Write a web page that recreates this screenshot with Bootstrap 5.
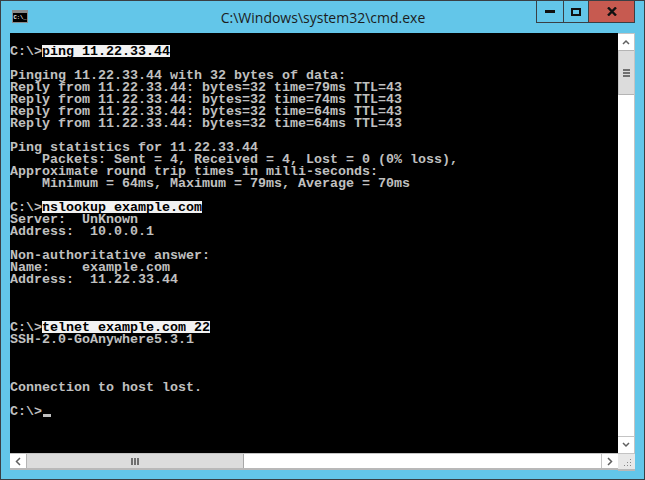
<!doctype html>
<html><head><meta charset="utf-8"><title>cmd</title>
<link href="https://cdn.jsdelivr.net/npm/bootstrap@5.3.0/dist/css/bootstrap.min.css" rel="stylesheet">
<style>
html,body{margin:0;height:480px;overflow:hidden;background:#63c6e9}
.win-frame{width:645px;height:480px;background:#63c6e9;border:1px solid #3a3f44;position:relative}
.title-row{height:32px}
.sys-ico{width:16px;height:13px;margin-left:11px;margin-top:9px;background:#000;border:1px solid #8a8a8a;border-top-width:3px;color:#eee;font:bold 5.5px/9px "Liberation Mono",monospace;overflow:hidden;text-align:center}
.title-txt{font:14px/1 "Segoe UI","Open Sans","Noto Sans",sans-serif;color:#1c1c1c;position:absolute;left:0;right:0;top:10px;text-align:center;padding-left:1px}
.caps{position:absolute;top:0;left:535px;height:22px;border:solid #3a3f44;border-width:0 1px 1px 1px}
.cap-b{height:21px;display:flex;align-items:center;justify-content:center;border-right:1px solid #3a3f44}
.cap-min{width:27px}.cap-max{width:25px}.cap-x{width:45px;background:#c75a50;border:0}
.body-row{margin-left:9px;width:625px}
.term{width:608px;height:420px;background:#000;color:#c0c0c0;margin:0;font:bold 13.33px/12px "Liberation Mono",monospace;overflow:hidden;padding:1px 0 0;white-space:pre;letter-spacing:0}
.term b{display:inline-block;height:12px;margin-top:-1px;padding-top:1px;background:#f2f2f2;color:#000;font-weight:bold;line-height:12px;vertical-align:top}
.cursor{display:inline-block;width:8px;height:3px;margin-left:1px;background:#c0c0c0;vertical-align:baseline;margin-bottom:-2px}
.vbar{width:17px;height:420px;background:#fff;border:solid #c4c4c4;border-width:1px 1px 0 0;display:flex;flex-direction:column;flex:none}
.sb-end{height:16px;display:flex;align-items:center;justify-content:center;background:#fff;flex:none}
.sb-thumb{background:#dcdcdc;border:solid #b4b4b4;border-width:1px 0;height:45px;display:flex;align-items:center;justify-content:center;border-left:1px solid #c4c4c4;flex:none}
.sb-last{border-top:1px solid #c4c4c4;height:17px}
.hbar{height:17px;display:flex;background:#fff;border-top:1px solid #c4c4c4;border-bottom:2px solid #b8b8b8}
.hb-end{width:16px;flex:none;display:flex;align-items:center;justify-content:center;background:#fff}
.hb-thumb{width:218px;flex:none;background:#dcdcdc;border-left:1px solid #b4b4b4;border-right:1px solid #a8a8a8;display:flex;align-items:center;justify-content:center}
.hb-fill{flex:1}
.hb-last{border-left:1px solid #c4c4c4;width:17px}
.grip{width:17px;flex:none;background:#e8e8e8;position:relative;border-top:1px solid #c4c4c4;border-bottom:2px solid #b8b8b8}
</style></head><body>
<div class="win-frame">
 <div class="title-row d-flex">
  <div class="sys-ico">C:\_</div>
  <div class="title-txt">C:\Windows\system32\cmd.exe</div>
 </div>
 <div class="caps d-flex">
  <div class="cap-b cap-min"><svg width="10" height="3"><rect width="10" height="3" fill="#111"/></svg></div>
  <div class="cap-b cap-max"><svg width="10" height="8"><rect x="1" y="1" width="8" height="6" fill="none" stroke="#111" stroke-width="2"/></svg></div>
  <div class="cap-b cap-x"><svg width="10" height="9" viewBox="0 0 10 9"><path d="M1 0.5L9 8.5M9 0.5L1 8.5" stroke="#111" stroke-width="2.4" fill="none"/></svg></div>
 </div>
 <div class="body-row d-flex">
<pre class="term">

C:\&gt;<b>ping 11.22.33.44</b>

Pinging 11.22.33.44 with 32 bytes of data:
Reply from 11.22.33.44: bytes=32 time=79ms TTL=43
Reply from 11.22.33.44: bytes=32 time=74ms TTL=43
Reply from 11.22.33.44: bytes=32 time=64ms TTL=43
Reply from 11.22.33.44: bytes=32 time=64ms TTL=43

Ping statistics for 11.22.33.44
    Packets: Sent = 4, Received = 4, Lost = 0 (0% loss),
Approximate round trip times in milli-seconds:
    Minimum = 64ms, Maximum = 79ms, Average = 70ms

C:\&gt;<b>nslookup example.com</b>
Server:  UnKnown
Address:  10.0.0.1

Non-authoritative answer:
Name:    example.com
Address:  11.22.33.44



C:\&gt;<b>telnet example.com 22</b>
SSH-2.0-GoAnywhere5.3.1



Connection to host lost.

C:\&gt;<span class="cursor"></span></pre>
  <div class="vbar">
   <div class="sb-end"><svg width="8" height="6"><path d="M1 5L4 2L7 5" fill="none" stroke="#606060" stroke-width="1.5"/></svg></div>
   <div class="sb-thumb"><svg width="7" height="8"><path d="M0 1h7M0 4h7M0 7h7" stroke="#707070" stroke-width="2"/></svg></div>
   <div class="flex-grow-1"></div>
   <div class="sb-end sb-last"><svg width="8" height="6"><path d="M1 1L4 4L7 1" fill="none" stroke="#606060" stroke-width="1.5"/></svg></div>
  </div>
 </div>
 <div class="body-row d-flex">
  <div class="hbar flex-grow-1">
   <div class="hb-end"><svg width="6" height="9"><path d="M5 1L1.5 4.5L5 8" fill="none" stroke="#606060" stroke-width="1.5"/></svg></div>
   <div class="hb-thumb"><svg width="8" height="7"><path d="M1 0v7M4 0v7M7 0v7" stroke="#707070" stroke-width="2"/></svg></div>
   <div class="hb-fill"></div>
   <div class="hb-end hb-last"><svg width="6" height="9"><path d="M1 1L4.5 4.5L1 8" fill="none" stroke="#606060" stroke-width="1.5"/></svg></div>
  </div>
  <div class="grip"><svg class="d-block" width="17" height="15"><path d="M12 5h1v1h-1zM12 8h1v1h-1zM9 8h1v1h-1zM12 11h1v1h-1zM9 11h1v1h-1zM6 11h1v1h-1z" fill="#888"/></svg></div>
 </div>
</div>
</body></html>
